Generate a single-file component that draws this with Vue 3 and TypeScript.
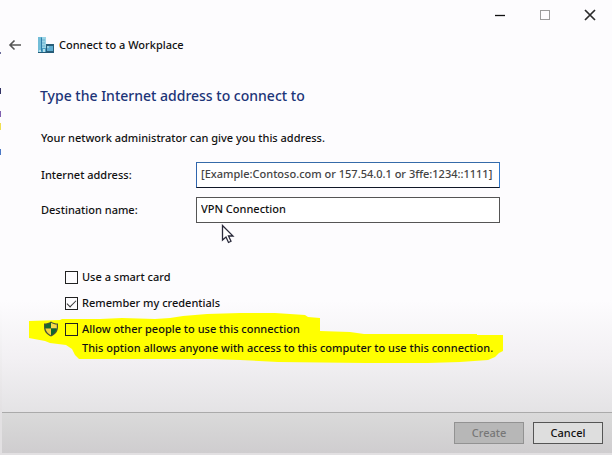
<script setup lang="ts">
import { ref } from 'vue'

const address = ref('')
const destination = ref('VPN Connection')
const smartCard = ref(false)
const remember = ref(true)
const allowOthers = ref(false)
</script>

<template>
  <div class="desktop">
    <main class="window">
      <div class="caption">
        <button type="button" aria-label="Minimize">
          <svg width="12" height="12" viewBox="0 0 12 12"><path d="M1 6.5H11" stroke="#111" stroke-width="1.3" /></svg>
        </button>
        <button type="button" aria-label="Maximize" disabled>
          <svg width="12" height="12" viewBox="0 0 12 12"><rect x="1.5" y="1.5" width="9" height="9" fill="none" stroke="#9b9b9b" /></svg>
        </button>
        <button type="button" aria-label="Close">
          <svg width="12" height="12" viewBox="0 0 12 12"><path d="M1 1L11 11M11 1L1 11" stroke="#2b2b2b" stroke-width="1.7" /></svg>
        </button>
      </div>

      <header class="title">
        <button type="button" class="back" aria-label="Back">
          <svg width="14" height="12" viewBox="0 0 14 12"><path d="M13 6H2M6.5 1.5L2 6L6.5 10.5" fill="none" stroke="#555" stroke-width="1.6" /></svg>
        </button>
        <svg class="logo" width="18" height="17" viewBox="0 0 18 17">
          <path d="M1 0H9V16H1Z" fill="#4a9fc4" />
          <path d="M1 0H4V16H1Z" fill="#72bdd8" />
          <path d="M5 0H9V11H5Z" fill="#9bd4e6" />
          <path d="M5 3H8M5 6H8M5 9H8" stroke="#6ab2d0" />
          <path d="M4.5 1V14" stroke="#2f7da8" />
          <path d="M9 7H17V16H9Z" fill="#285d78" />
          <path d="M10 9H16V14H10Z" fill="#5facd0" />
          <path d="M10 9H12V11H10Z" fill="#93cee0" />
          <path d="M1 15.5H17" stroke="#245b78" />
          <path d="M2 13H4V15H2ZM6 12H8V15H6Z" fill="#b5dfea" />
        </svg>
        <span>Connect to a Workplace</span>
      </header>

      <form class="page" @submit.prevent>
        <div class="content">
          <h1>Type the Internet address to connect to</h1>
          <p class="intro">Your network administrator can give you this address.</p>

          <div class="fields">
            <label for="address">Internet address:</label>
            <input id="address" v-model="address" class="active" type="text" placeholder="[Example:Contoso.com or 157.54.0.1 or 3ffe:1234::1111]">
            <label for="destination">Destination name:</label>
            <input id="destination" v-model="destination" type="text">
          </div>

          <div class="options">
            <svg class="marker" width="476" height="52" viewBox="28 312 476 52" aria-hidden="true">
              <path d="M29 321L60 320L62 319H100L122 318L155 319L170 318L183 316L207 314L240 313H275L305 315L308 317L320 318V331L350 332L364 334H477V335H503V351L499 353L495 357L488 360L460 362L428 363H365L278 362L240 360L210 359H79L75 355L72 349L66 345L50 343L45 341L29 338Z" fill="#ff0" />
            </svg>
            <label class="option"><input v-model="smartCard" type="checkbox"><span>Use a smart card</span></label>
            <label class="option"><input v-model="remember" type="checkbox"><span>Remember my credentials</span></label>
            <div class="shared">
              <svg class="shield" width="16" height="16" viewBox="0 0 16 16" aria-hidden="true">
                <path d="M8 0.5C6 2 3.5 2.5 1 2.5V6C1 10.5 3.5 13.5 8 15.5C12.5 13.5 15 10.5 15 6V2.5C12.5 2.5 10 2 8 0.5Z" fill="#4a5236" />
                <path d="M8 1.8C6.2 3 4 3.5 2.2 3.6V7.5H8Z" fill="#17692f" />
                <path d="M8 1.8C9.8 3 12 3.5 13.8 3.6V7.5H8Z" fill="#f6d84c" />
                <path d="M2.4 7.5H8V14.2C5 12.8 3 10.5 2.4 7.5Z" fill="#f4d341" />
                <path d="M13.6 7.5H8V14.2C11 12.8 13 10.5 13.6 7.5Z" fill="#0d6530" />
              </svg>
              <label class="option"><input v-model="allowOthers" type="checkbox" aria-describedby="sharing-note"><span>Allow other people to use this connection</span></label>
            </div>
            <p id="sharing-note" class="note">This option allows anyone with access to this computer to use this connection.</p>
          </div>
        </div>

        <footer>
          <button type="submit" disabled>Create</button>
          <button type="button">Cancel</button>
        </footer>
      </form>
      <svg class="pointer" width="15" height="21" viewBox="0 0 15 21" aria-hidden="true">
        <path d="M1.5 1.5V16L5 13L7.5 18.5L10 17.3L7.5 12H12Z" fill="#fff" stroke="#29293a" stroke-width="1.3" />
      </svg>
    </main>
  </div>
</template>

<style>
body {
  margin: 0;
}
</style>

<style scoped>
* {
  box-sizing: border-box;
}

.desktop {
  min-height: 100vh;
  display: flex;
  padding: 0 0 2px 2px;
  font-family: "Noto Sans", "Open Sans", sans-serif;
  font-size: 11px;
  font-weight: 500;
  line-height: 18px;
  color: #111;
  background:
    linear-gradient(#6b6b9a, #6b6b9a) 0 52px / 1px 2px no-repeat,
    linear-gradient(#333366, #333366) 0 88px / 1px 6px no-repeat,
    linear-gradient(#8060b0, #8060b0) 0 111px / 1px 6px no-repeat,
    linear-gradient(#f0df50, #f0df50) 0 123px / 1px 7px no-repeat,
    linear-gradient(#4b78c5, #4b78c5) 0 149px / 1px 6px no-repeat,
    linear-gradient(#fdfcfe 300px, #e2e0e2 415px);
}

.window {
  position: relative;
  flex: 1;
  min-width: 0;
  display: flex;
  flex-direction: column;
  background: linear-gradient(#fdfcfe 300px, #f2f0f3 360px, #e4e3e5 412px);
}

.caption {
  display: flex;
  justify-content: flex-end;
  height: 30px;
}

.caption button {
  width: 45px;
  height: 30px;
  display: grid;
  place-items: center;
}

.caption button,
.back {
  padding: 0;
  border: 0;
  background: transparent;
}

.title {
  display: flex;
  align-items: center;
  height: 30px;
  padding-left: 6px;
}

.back {
  display: flex;
  margin-right: 15px;
}

.logo {
  margin-right: 4px;
}

.page {
  flex: 1;
  display: flex;
  flex-direction: column;
}

.content {
  flex: 1;
  padding: 24px 112px 48px 38px;
}

h1 {
  margin: 0;
  font-size: 14px;
  line-height: 24px;
  font-weight: 500;
  color: #1c3478;
}

p {
  margin: 0;
}

.intro {
  padding: 21px 0 0 1px;
}

.fields {
  display: grid;
  grid-template-columns: 155px 1fr;
  row-gap: 9px;
  align-items: center;
  padding: 15px 0 0 1px;
}

.fields input {
  width: 100%;
  min-width: 0;
  height: 26px;
  padding: 0 4px 3px;
  border: 1px solid #555;
  border-radius: 0;
  outline: 0;
  background: #fff;
  color: #111;
  font: inherit;
}

.fields .active {
  border-color: #356ba9 #2f78cc #101827 #2f65ae;
}

.fields input::placeholder {
  color: #444;
  opacity: 1;
}

.options {
  position: relative;
  display: flex;
  flex-direction: column;
  align-items: flex-start;
  gap: 8px;
  padding: 45px 0 0 25px;
}

.marker {
  position: absolute;
  left: -12px;
  bottom: -7px;
}

.option {
  position: relative;
  display: flex;
  align-items: center;
  gap: 4px;
  white-space: nowrap;
}

.option input {
  appearance: none;
  width: 13px;
  height: 13px;
  margin: 0;
  border: 1px solid #222;
  background: transparent;
}

.option input:checked::before {
  content: "";
  display: block;
  width: 8px;
  height: 4px;
  margin: 2px 0 0 1px;
  border: solid #333;
  border-width: 0 0 1px 1px;
  transform: rotate(-45deg);
}

.shared {
  position: relative;
  display: flex;
  align-items: center;
  gap: 6px;
  margin-left: -22px;
}

.note {
  position: relative;
  margin-top: -7px;
  padding-left: 17px;
  white-space: nowrap;
}

footer {
  display: flex;
  justify-content: flex-end;
  gap: 9px;
  padding: 9px;
  border-top: 1px solid #aaa;
  background: linear-gradient(#dadada, #cfcdcf);
}

footer button {
  width: 70px;
  height: 22px;
  padding: 0;
  border: 1px solid #555;
  border-radius: 0;
  background: #dedede;
  color: #111;
  font: inherit;
}

footer button:disabled {
  border-color: #929292;
  background: #b7b7b7;
  color: #777;
}

.pointer {
  position: absolute;
  left: 219px;
  top: 224px;
}
</style>
